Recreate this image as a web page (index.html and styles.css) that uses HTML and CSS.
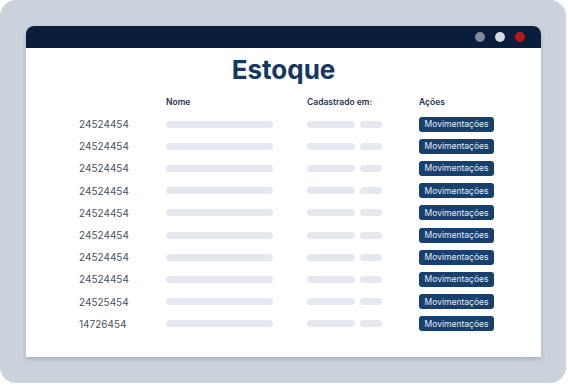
FILE: index.html
```html
<!DOCTYPE html>
<html lang="pt">
<head>
  <meta charset="UTF-8" />
  <title>Estoque</title>
  <link rel="stylesheet" href="styles.css">
</head>
<body>
  <div class="frame">
    <div class="window">
      <!-- barra da janela -->
      <div class="titlebar">
        <span class="dot gray"></span>
        <span class="dot light"></span>
        <span class="dot red"></span>
      </div>

      <div class="content">
        <h1>Estoque</h1>

        <div class="table">
          <div class="row head">
            <span></span>
            <span>Nome</span>
            <span>Cadastrado em:</span>
            <span>Ações</span>
          </div>

          <div class="row"><span class="code">24524454</span><span class="bar name"></span><span class="dates"><i class="bar d1"></i><i class="bar d2"></i></span><button class="btn">Movimentações</button></div>
          <div class="row"><span class="code">24524454</span><span class="bar name"></span><span class="dates"><i class="bar d1"></i><i class="bar d2"></i></span><button class="btn">Movimentações</button></div>
          <div class="row"><span class="code">24524454</span><span class="bar name"></span><span class="dates"><i class="bar d1"></i><i class="bar d2"></i></span><button class="btn">Movimentações</button></div>
          <div class="row"><span class="code">24524454</span><span class="bar name"></span><span class="dates"><i class="bar d1"></i><i class="bar d2"></i></span><button class="btn">Movimentações</button></div>
          <div class="row"><span class="code">24524454</span><span class="bar name"></span><span class="dates"><i class="bar d1"></i><i class="bar d2"></i></span><button class="btn">Movimentações</button></div>
          <div class="row"><span class="code">24524454</span><span class="bar name"></span><span class="dates"><i class="bar d1"></i><i class="bar d2"></i></span><button class="btn">Movimentações</button></div>
          <div class="row"><span class="code">24524454</span><span class="bar name"></span><span class="dates"><i class="bar d1"></i><i class="bar d2"></i></span><button class="btn">Movimentações</button></div>
          <div class="row"><span class="code">24524454</span><span class="bar name"></span><span class="dates"><i class="bar d1"></i><i class="bar d2"></i></span><button class="btn">Movimentações</button></div>
          <div class="row"><span class="code">24525454</span><span class="bar name"></span><span class="dates"><i class="bar d1"></i><i class="bar d2"></i></span><button class="btn">Movimentações</button></div>
          <div class="row"><span class="code">14726454</span><span class="bar name"></span><span class="dates"><i class="bar d1"></i><i class="bar d2"></i></span><button class="btn">Movimentações</button></div>
        </div>
      </div>
    </div>
  </div>
</body>
</html>
```

FILE: styles.css
```css
* {
  box-sizing: border-box;
}
body {
  margin: 0;
  background-color: #ffffff;
  font-family: 'Inter', 'Roboto', sans-serif;
}
.frame {
  width: 566px;
  height: 383px;
  padding: 26px 25px 0 26px;
  background-color: #cbd2db;
  border-radius: 16px;
}
.window {
  width: 515px;
  height: 331px;
  background-color: #ffffff;
  border-radius: 8px 8px 0 0;
  overflow: hidden;
  box-shadow: 0 2px 4px rgba(60, 70, 90, 0.25);
}
.titlebar {
  height: 22px;
  background-color: #0a1d3d;
  display: flex;
  justify-content: flex-end;
  align-items: center;
  gap: 10px;
  padding-right: 16px;
}
.dot {
  width: 10px;
  height: 10px;
  border-radius: 50%;
}
.dot.gray {
  background-color: #7f8a9a;
}
.dot.light {
  background-color: #d7dbe2;
}
.dot.red {
  background-color: #b8191b;
}
.content {
  padding-top: 4px;
}
h1 {
  margin: 0;
  text-align: center;
  font-size: 26px;
  line-height: 36px;
  font-weight: 700;
  color: #143861;
}
.table {
  margin-top: 3px;
}
.row {
  display: grid;
  grid-template-columns: 87px 141px 112px 80px;
  align-items: center;
  height: 22.2px;
  padding-left: 53px;
}
.row.head {
  height: 22px;
  font-size: 8.5px;
  font-weight: 600;
  color: #1e3350;
}
.code {
  font-size: 10px;
  color: #4a525c;
}
.bar {
  display: block;
  height: 7px;
  border-radius: 4px;
  background-color: #e5e9ef;
}
.bar.name {
  width: 107px;
}
.dates {
  display: flex;
  gap: 5px;
}
.bar.d1 {
  width: 48px;
}
.bar.d2 {
  width: 22px;
}
.btn {
  width: 75px;
  height: 15px;
  padding: 0;
  border: none;
  border-radius: 3px;
  background-color: #17406f;
  color: #e6ecf3;
  font-family: 'Inter', 'Roboto', sans-serif;
  font-size: 8.5px;
}
```
